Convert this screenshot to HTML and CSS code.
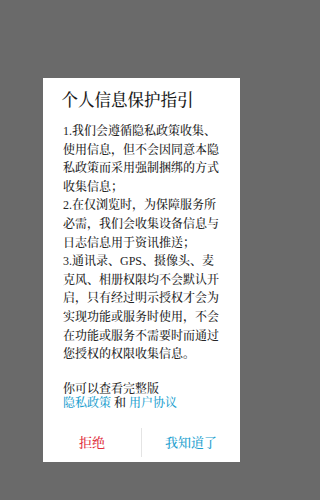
FILE: index.html
```html
<!DOCTYPE html>
<html lang="zh-CN">
<head>
<meta charset="utf-8">
<title>个人信息保护指引</title>
<link rel="stylesheet" href="styles.css">
</head>
<body>
<div class="page">
  <div class="dialog">
    <div class="content">
      <h1 class="title">个人信息保护指引</h1>
      <div class="body">
        <p class="para">1.我们会遵循隐私政策收集、<br>使用信息，但不会因同意本隐<br>私政策而采用强制捆绑的方式<br>收集信息；</p>
        <p class="para">2.在仅浏览时，为保障服务所<br>必需，我们会收集设备信息与<br>日志信息用于资讯推送；</p>
        <p class="para">3.通讯录、GPS、摄像头、麦<br>克风、相册权限均不会默认开<br>启，只有经过明示授权才会为<br>实现功能或服务时使用，不会<br>在功能或服务不需要时而通过<br>您授权的权限收集信息。</p>
      </div>
      <div class="more">
        <p class="more-line">你可以查看完整版</p>
        <p class="more-line"><a class="link" href="#">隐私政策</a> 和 <a class="link" href="#">用户协议</a></p>
      </div>
    </div>
    <div class="actions">
      <button class="btn btn-reject" type="button">拒绝</button>
      <span class="divider"></span>
      <button class="btn btn-accept" type="button">我知道了</button>
    </div>
  </div>
</div>
</body>
</html>
```

FILE: styles.css
```css
html, body {
  margin: 0;
  padding: 0;
}

body {
  background: #6a6a6a;
  font-family: "Liberation Serif", "Noto Serif CJK SC", "Noto Sans CJK SC", serif;
  color: #262626;
  width: 282px;
  height: 500px;
  overflow: hidden;
}

.page {
  display: flex;
  justify-content: center;
  padding-top: 78px;
  padding-left: 1px;
}

.dialog {
  width: 197px;
  height: 384px;
  background: #ffffff;
  display: flex;
  flex-direction: column;
}

.content {
  padding: 13px 20px 0 20px;
}

.title {
  margin: 0 0 0 -1.5px;
  font-size: 16.5px;
  font-weight: 500;
  line-height: 20px;
  color: #1a1a1a;
}

.body {
  margin-top: 11px;
  font-size: 12px;
  line-height: 18.6px;
  font-weight: 500;
}

.para {
  margin: 0;
  white-space: nowrap;
}

.more {
  margin-top: 18px;
  font-size: 12px;
  line-height: 14.5px;
  font-weight: 500;
}

.more-line {
  margin: 0;
  white-space: nowrap;
}

.link {
  color: #1e9fcf;
  text-decoration: none;
}

.actions {
  margin-top: auto;
  display: flex;
  align-items: center;
  padding: 6px 0 5px 0;
}

.btn {
  flex: 1;
  height: 29px;
  line-height: 29px;
  padding: 0;
  border: 0;
  background: transparent;
  font-family: inherit;
  font-size: 13px;
  font-weight: 500;
  text-align: center;
}

.btn-reject {
  color: #e02d3c;
}

.btn-accept {
  color: #1e9fcf;
}

.divider {
  width: 1px;
  height: 29px;
  background: #e4e4e4;
}
```
